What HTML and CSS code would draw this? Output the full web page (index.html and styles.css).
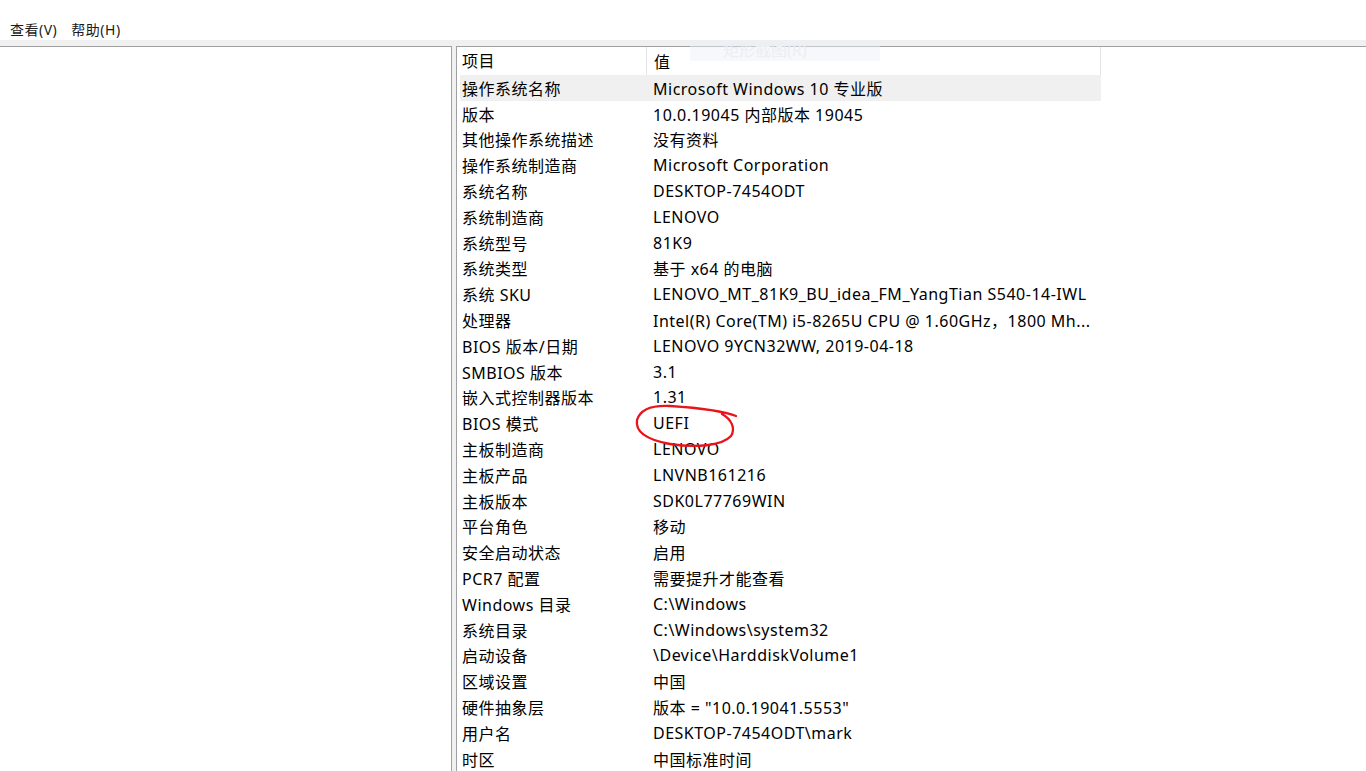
FILE: index.html
```html
<!DOCTYPE html>
<html>
<head>
  <meta charset="utf-8">
  <link rel="stylesheet" href="styles.css">
</head>
<body>
  <div class="menu-bar">
    <span class="menu-item">查看(V)</span>
    <span class="menu-item">帮助(H)</span>
  </div>
  <div class="menu-gap"></div>

  <div class="panes">
    <!-- Left tree pane (empty) -->
    <div class="tree-pane"></div>

    <!-- Right list pane -->
    <div class="list-pane">
      <div class="list">
        <div class="list-header">
          <div class="col-name">项目</div>
          <div class="col-value">值</div>
        </div>
        <div class="row selected"><div class="col-name">操作系统名称</div><div class="col-value">Microsoft Windows 10 专业版</div></div>
        <div class="row"><div class="col-name">版本</div><div class="col-value">10.0.19045 内部版本 19045</div></div>
        <div class="row"><div class="col-name">其他操作系统描述</div><div class="col-value">没有资料</div></div>
        <div class="row"><div class="col-name">操作系统制造商</div><div class="col-value">Microsoft Corporation</div></div>
        <div class="row"><div class="col-name">系统名称</div><div class="col-value">DESKTOP-7454ODT</div></div>
        <div class="row"><div class="col-name">系统制造商</div><div class="col-value">LENOVO</div></div>
        <div class="row"><div class="col-name">系统型号</div><div class="col-value">81K9</div></div>
        <div class="row"><div class="col-name">系统类型</div><div class="col-value">基于 x64 的电脑</div></div>
        <div class="row"><div class="col-name">系统 SKU</div><div class="col-value">LENOVO_MT_81K9_BU_idea_FM_YangTian S540-14-IWL</div></div>
        <div class="row"><div class="col-name">处理器</div><div class="col-value">Intel(R) Core(TM) i5-8265U CPU @ 1.60GHz，1800 Mh...</div></div>
        <div class="row"><div class="col-name">BIOS 版本/日期</div><div class="col-value">LENOVO 9YCN32WW, 2019-04-18</div></div>
        <div class="row"><div class="col-name">SMBIOS 版本</div><div class="col-value">3.1</div></div>
        <div class="row"><div class="col-name">嵌入式控制器版本</div><div class="col-value">1.31</div></div>
        <div class="row"><div class="col-name">BIOS 模式</div><div class="col-value">UEFI</div></div>
        <div class="row"><div class="col-name">主板制造商</div><div class="col-value">LENOVO</div></div>
        <div class="row"><div class="col-name">主板产品</div><div class="col-value">LNVNB161216</div></div>
        <div class="row"><div class="col-name">主板版本</div><div class="col-value">SDK0L77769WIN</div></div>
        <div class="row"><div class="col-name">平台角色</div><div class="col-value">移动</div></div>
        <div class="row"><div class="col-name">安全启动状态</div><div class="col-value">启用</div></div>
        <div class="row"><div class="col-name">PCR7 配置</div><div class="col-value">需要提升才能查看</div></div>
        <div class="row"><div class="col-name">Windows 目录</div><div class="col-value">C:\Windows</div></div>
        <div class="row"><div class="col-name">系统目录</div><div class="col-value">C:\Windows\system32</div></div>
        <div class="row"><div class="col-name">启动设备</div><div class="col-value">\Device\HarddiskVolume1</div></div>
        <div class="row"><div class="col-name">区域设置</div><div class="col-value">中国</div></div>
        <div class="row"><div class="col-name">硬件抽象层</div><div class="col-value">版本 = "10.0.19041.5553"</div></div>
        <div class="row"><div class="col-name">用户名</div><div class="col-value">DESKTOP-7454ODT\mark</div></div>
        <div class="row"><div class="col-name">时区</div><div class="col-value">中国标准时间</div></div>
      </div>
    </div>
  </div>

  <!-- faded tooltip left over from the screenshot tool -->
  <div class="ghost-tip">矩形截图(R)</div>

  <!-- red hand-drawn mark around UEFI -->
  <svg class="mark" width="1366" height="771" viewBox="0 0 1366 771">
    <path d="M736 416 C726 412, 700 408, 670 406 C650 405, 640 410, 637 420 C635 432, 648 440, 670 444 C695 448, 722 446, 731 436 C736 428, 731 419, 722 414"
          fill="none" stroke="#e8131b" stroke-width="2.3" stroke-linecap="round"/>
  </svg>
</body>
</html>
```

FILE: styles.css
```css
body {
  margin: 0;
  background: #fff;
  color: #000;
  font-family: "Noto Sans", "Noto Sans CJK SC", sans-serif;
  height: 771px;
  overflow: hidden;
}

/* Menu */
.menu-bar {
  height: 40px;
  display: flex;
  align-items: flex-end;
  padding-left: 10px;
  gap: 14px;
  font-size: 14px;
  letter-spacing: 0.5px;
  box-sizing: border-box;
  padding-bottom: 1px;
}

.menu-item {
  color: #1a1a1a;
}

.menu-gap {
  height: 6px;
  background: #f0f0f0;
}

/* Split panes */
.panes {
  display: flex;
  background: #f0f0f0;
  height: 725px;
}

.tree-pane {
  width: 451px;
  background: #fff;
  border-top: 1px solid #a0a0a0;
  border-right: 1px solid #a0a0a0;
}

.list-pane {
  flex: 1;
  margin-left: 4px;
  background: #fff;
  border-top: 1px solid #a0a0a0;
  border-left: 1px solid #a0a0a0;
  padding-left: 3px;
}

.list {
  width: 641px;
  font-size: 16px;
  letter-spacing: 0.5px;
}

.list-header {
  display: flex;
  height: 28px;
  align-items: center;
  border-right: 1px solid #e5e5e5;
}

.list-header .col-name {
  border-right: 1px solid #e5e5e5;
  height: 28px;
  line-height: 29px;
}

.row {
  display: flex;
  height: 25.8px;
  align-items: center;
  white-space: nowrap;
}

.row.selected {
  background: #f0f0f0;
}

.col-name {
  width: 184px;
  padding-left: 2px;
  flex: none;
}

.col-value {
  flex: 1;
  padding-left: 7px;
  overflow: hidden;
  white-space: nowrap;
}

/* Overlays */
.ghost-tip {
  position: absolute;
  left: 690px;
  top: 40px;
  width: 190px;
  height: 21px;
  background: rgba(236, 240, 246, 0.45);
  color: #eceef2;
  font-size: 16px;
  line-height: 21px;
  padding-left: 33px;
  box-sizing: border-box;
}

.mark {
  position: absolute;
  left: 0;
  top: 0;
  pointer-events: none;
}
```
